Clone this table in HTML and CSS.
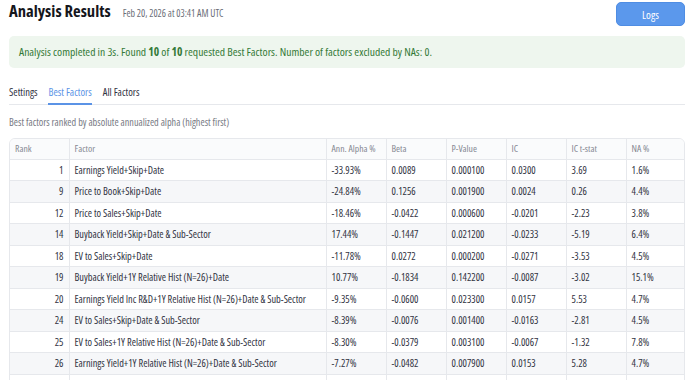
FILE: index.html
```html
<!DOCTYPE html>
<html lang="en">
<head>
    <meta charset="UTF-8">
    <title>Analysis Results</title>
    <link rel="stylesheet" href="styles.css">
</head>
<body>

    <div class="page">

        <div class="header">
            <div class="title">
                <h1>Analysis Results</h1>
                <span class="timestamp">Feb 20, 2026 at 03:41 AM UTC</span>
            </div>
            <button class="logs-btn">Logs</button>
        </div>

        <div class="alert">
            Analysis completed in 3s. Found <strong>10</strong> of <strong>10</strong> requested Best Factors. Number of factors excluded by NAs: 0.
        </div>

        <div class="tabs">
            <span class="tab">Settings</span>
            <span class="tab active">Best Factors</span>
            <span class="tab">All Factors</span>
        </div>

        <p class="caption">Best factors ranked by absolute annualized alpha (highest first)</p>

        <div class="table-wrap">
            <table class="results">
                <colgroup>
                    <col class="col-rank">
                    <col class="col-factor">
                    <col class="col-num">
                    <col class="col-num">
                    <col class="col-num">
                    <col class="col-num">
                    <col class="col-num">
                    <col>
                </colgroup>
                <thead>
                    <tr>
                        <th>Rank</th>
                        <th>Factor</th>
                        <th>Ann. Alpha %</th>
                        <th>Beta</th>
                        <th>P-Value</th>
                        <th>IC</th>
                        <th>IC t-stat</th>
                        <th>NA %</th>
                    </tr>
                </thead>
                <tbody>
                    <tr><td class="rank">1</td><td>Earnings Yield+Skip+Date</td><td>-33.93%</td><td>0.0089</td><td>0.000100</td><td>0.0300</td><td>3.69</td><td>1.6%</td></tr>
                    <tr><td class="rank">9</td><td>Price to Book+Skip+Date</td><td>-24.84%</td><td>0.1256</td><td>0.001900</td><td>0.0024</td><td>0.26</td><td>4.4%</td></tr>
                    <tr><td class="rank">12</td><td>Price to Sales+Skip+Date</td><td>-18.46%</td><td>-0.0422</td><td>0.000600</td><td>-0.0201</td><td>-2.23</td><td>3.8%</td></tr>
                    <tr><td class="rank">14</td><td>Buyback Yield+Skip+Date &amp; Sub-Sector</td><td>17.44%</td><td>-0.1447</td><td>0.021200</td><td>-0.0233</td><td>-5.19</td><td>6.4%</td></tr>
                    <tr><td class="rank">18</td><td>EV to Sales+Skip+Date</td><td>-11.78%</td><td>0.0272</td><td>0.000200</td><td>-0.0271</td><td>-3.53</td><td>4.5%</td></tr>
                    <tr><td class="rank">19</td><td>Buyback Yield+1Y Relative Hist (N=26)+Date</td><td>10.77%</td><td>-0.1834</td><td>0.142200</td><td>-0.0087</td><td>-3.02</td><td>15.1%</td></tr>
                    <tr><td class="rank">20</td><td>Earnings Yield Inc R&amp;D+1Y Relative Hist (N=26)+Date &amp; Sub-Sector</td><td>-9.35%</td><td>-0.0600</td><td>0.023300</td><td>0.0157</td><td>5.53</td><td>4.7%</td></tr>
                    <tr><td class="rank">24</td><td>EV to Sales+Skip+Date &amp; Sub-Sector</td><td>-8.39%</td><td>-0.0076</td><td>0.001400</td><td>-0.0163</td><td>-2.81</td><td>4.5%</td></tr>
                    <tr><td class="rank">25</td><td>EV to Sales+1Y Relative Hist (N=26)+Date &amp; Sub-Sector</td><td>-8.30%</td><td>-0.0379</td><td>0.003100</td><td>-0.0067</td><td>-1.32</td><td>7.8%</td></tr>
                    <tr><td class="rank">26</td><td>Earnings Yield+1Y Relative Hist (N=26)+Date &amp; Sub-Sector</td><td>-7.27%</td><td>-0.0482</td><td>0.007900</td><td>0.0153</td><td>5.28</td><td>4.7%</td></tr>
                    <tr class="filler"><td></td><td></td><td></td><td></td><td></td><td></td><td></td><td></td></tr>
                </tbody>
            </table>
        </div>

    </div>

</body>
</html>
```

FILE: styles.css
```css
* {
    margin: 0;
    padding: 0;
    box-sizing: border-box;
    font-family: 'Open Sans', sans-serif;
    font-stretch: 75%;
}

body {
    background: #ffffff;
    color: #31333f;
}

.page {
    padding: 0 5px 0 9px;
}


.header {
    height: 28px;
    display: flex;
    justify-content: space-between;
    align-items: flex-start;
}

.title {
    display: flex;
    align-items: baseline;
    gap: 12px;
    padding-top: 1px;
}

.title h1 {
    font-size: 16.6px;
    font-weight: 700;
    line-height: 20px;
    color: #15161c;
}

.timestamp {
    font-size: 9.9px;
    color: #6b6e78;
}

.logs-btn {
    margin-top: 2px;
    width: 69px;
    height: 24px;
    background: #5b98ec;
    color: white;
    border: 1px solid #4f8de3;
    border-radius: 5px;
    font-size: 11px;
}


.alert {
    margin-top: 8px;
    height: 32px;
    line-height: 32px;
    padding: 0 10px;
    background: #eef6ee;
    color: #357a38;
    border-radius: 5px;
    font-size: 11.6px;
}

.alert strong {
    font-weight: 700;
}


.tabs {
    margin-top: 13px;
    display: flex;
    gap: 11px;
    border-bottom: 1px solid #e6e8ec;
}

.tab {
    padding: 4px 0;
    line-height: 14px;
    font-size: 10.5px;
    color: #31333f;
    border-bottom: 2px solid transparent;
    margin-bottom: -1px;
}

.tab.active {
    color: #5b93e6;
    border-bottom-color: #5b93e6;
}


.caption {
    margin-top: 10px;
    line-height: 14px;
    font-size: 10.2px;
    color: #777a84;
}


.table-wrap {
    margin-top: 9px;
    border: 1px solid #e6e8ec;
    border-radius: 6px;
    overflow: hidden;
}

.results {
    width: 100%;
    border-collapse: collapse;
    table-layout: fixed;
    font-size: 10.3px;
}

.col-rank { width: 59px; }
.col-factor { width: 257px; }
.col-num { width: 60px; }

.results th,
.results td {
    padding: 0 5px;
    text-align: left;
    white-space: nowrap;
    overflow: hidden;
    border-right: 1px solid #e6e8ec;
    border-bottom: 1px solid #e6e8ec;
}

.results th:last-child,
.results td:last-child {
    border-right: none;
}

.results thead tr {
    height: 20px;
    background: #fafbfc;
}

.results th {
    font-weight: 400;
    font-size: 9.7px;
    color: #858892;
}

.results tbody tr {
    height: 21.5px;
}

.results tbody tr:nth-child(even) {
    background: #f6f7f9;
}

.results tbody tr.filler {
    background: #ffffff;
}

.results td.rank {
    text-align: right;
}
```
